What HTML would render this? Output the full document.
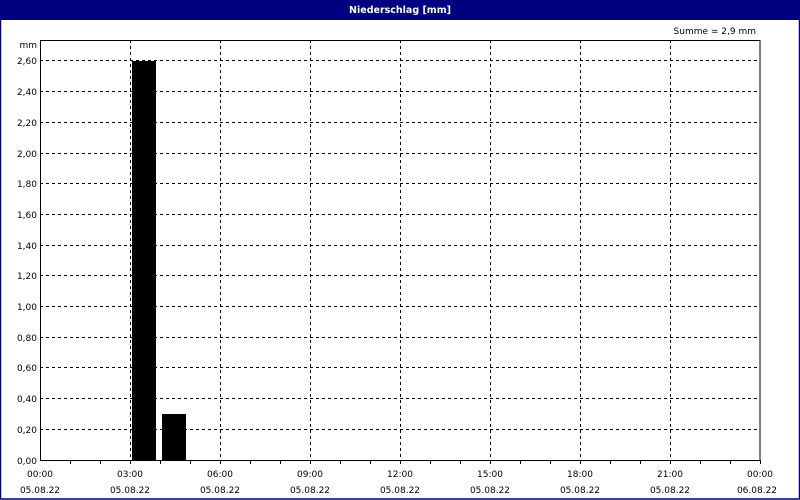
<!DOCTYPE html>
<html><head><meta charset="utf-8"><style>
html,body{margin:0;padding:0;background:#fff;}
body{width:800px;height:500px;overflow:hidden;position:relative;font-family:"DejaVu Sans","Liberation Sans",sans-serif;}
</style></head><body>
<svg width="800" height="500" xmlns="http://www.w3.org/2000/svg" style="position:absolute;left:0;top:0" font-family="DejaVu Sans, Liberation Sans, sans-serif" font-size="9">
<rect x="0" y="0" width="800" height="500" fill="#fff"/>
<rect x="0" y="0" width="800" height="20" fill="#000080"/>
<rect x="0.5" y="0.5" width="799" height="498.5" fill="none" stroke="#000080" stroke-width="1.5"/>
<text x="400" y="13" text-anchor="middle" fill="#fff" font-weight="bold" font-size="9.5">Niederschlag [mm]</text>
<text x="756" y="34" text-anchor="end" fill="#000">Summe = 2,9 mm</text>
<text x="37" y="48" text-anchor="end">mm</text>
<g stroke="#000" stroke-width="1" stroke-dasharray="3,3" shape-rendering="crispEdges">
<line x1="40" x2="760" y1="429.5" y2="429.5"/><line x1="40" x2="760" y1="398.5" y2="398.5"/><line x1="40" x2="760" y1="367.5" y2="367.5"/><line x1="40" x2="760" y1="337.5" y2="337.5"/><line x1="40" x2="760" y1="306.5" y2="306.5"/><line x1="40" x2="760" y1="275.5" y2="275.5"/><line x1="40" x2="760" y1="245.5" y2="245.5"/><line x1="40" x2="760" y1="214.5" y2="214.5"/><line x1="40" x2="760" y1="183.5" y2="183.5"/><line x1="40" x2="760" y1="153.5" y2="153.5"/><line x1="40" x2="760" y1="122.5" y2="122.5"/><line x1="40" x2="760" y1="91.5" y2="91.5"/><line x1="40" x2="760" y1="60.5" y2="60.5"/>
<line y1="40" y2="460" x1="130.5" x2="130.5"/><line y1="40" y2="460" x1="220.5" x2="220.5"/><line y1="40" y2="460" x1="310.5" x2="310.5"/><line y1="40" y2="460" x1="400.5" x2="400.5"/><line y1="40" y2="460" x1="490.5" x2="490.5"/><line y1="40" y2="460" x1="580.5" x2="580.5"/><line y1="40" y2="460" x1="670.5" x2="670.5"/>
</g>
<rect x="132" y="61" width="24" height="399" fill="#000"/>
<rect x="162" y="414" width="24" height="46" fill="#000"/>
<rect x="40.5" y="40.5" width="719.5" height="420" fill="none" stroke="#000" stroke-width="1" shape-rendering="crispEdges"/>
<g stroke="#000" shape-rendering="crispEdges">
<line x1="70.5" x2="70.5" y1="460" y2="464"/><line x1="100.5" x2="100.5" y1="460" y2="464"/><line x1="130.5" x2="130.5" y1="460" y2="464"/><line x1="160.5" x2="160.5" y1="460" y2="464"/><line x1="190.5" x2="190.5" y1="460" y2="464"/><line x1="220.5" x2="220.5" y1="460" y2="464"/><line x1="250.5" x2="250.5" y1="460" y2="464"/><line x1="280.5" x2="280.5" y1="460" y2="464"/><line x1="310.5" x2="310.5" y1="460" y2="464"/><line x1="340.5" x2="340.5" y1="460" y2="464"/><line x1="370.5" x2="370.5" y1="460" y2="464"/><line x1="400.5" x2="400.5" y1="460" y2="464"/><line x1="430.5" x2="430.5" y1="460" y2="464"/><line x1="460.5" x2="460.5" y1="460" y2="464"/><line x1="490.5" x2="490.5" y1="460" y2="464"/><line x1="520.5" x2="520.5" y1="460" y2="464"/><line x1="550.5" x2="550.5" y1="460" y2="464"/><line x1="580.5" x2="580.5" y1="460" y2="464"/><line x1="610.5" x2="610.5" y1="460" y2="464"/><line x1="640.5" x2="640.5" y1="460" y2="464"/><line x1="670.5" x2="670.5" y1="460" y2="464"/><line x1="700.5" x2="700.5" y1="460" y2="464"/><line x1="730.5" x2="730.5" y1="460" y2="464"/><line x1="760.5" x2="760.5" y1="460" y2="464"/>
</g>
<g text-anchor="end">
<text x="37" y="464">0,00</text><text x="37" y="433">0,20</text><text x="37" y="402">0,40</text><text x="37" y="371">0,60</text><text x="37" y="341">0,80</text><text x="37" y="310">1,00</text><text x="37" y="279">1,20</text><text x="37" y="249">1,40</text><text x="37" y="218">1,60</text><text x="37" y="187">1,80</text><text x="37" y="157">2,00</text><text x="37" y="126">2,20</text><text x="37" y="95">2,40</text><text x="37" y="64">2,60</text>
</g>
<g text-anchor="middle">
<text x="40" y="477">00:00</text><text x="40" y="493">05.08.22</text>
<text x="130" y="477">03:00</text><text x="130" y="493">05.08.22</text>
<text x="220" y="477">06:00</text><text x="220" y="493">05.08.22</text>
<text x="310" y="477">09:00</text><text x="310" y="493">05.08.22</text>
<text x="400" y="477">12:00</text><text x="400" y="493">05.08.22</text>
<text x="490" y="477">15:00</text><text x="490" y="493">05.08.22</text>
<text x="580" y="477">18:00</text><text x="580" y="493">05.08.22</text>
<text x="670" y="477">21:00</text><text x="670" y="493">05.08.22</text>
<text x="760" y="477">00:00</text><text x="757" y="493">06.08.22</text>
</g>
</svg>
</body></html>
